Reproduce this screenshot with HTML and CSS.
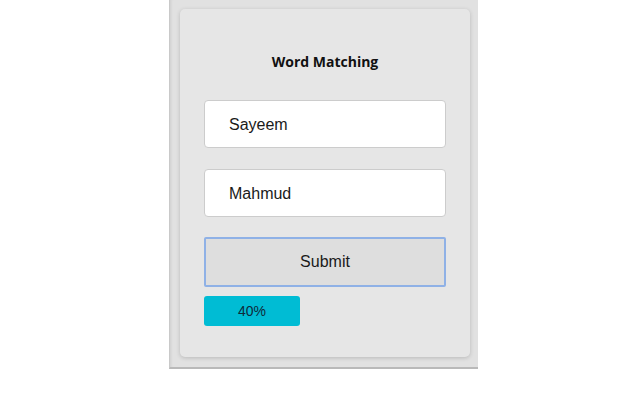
FILE: index.html
```html
<!DOCTYPE html>
<html>
<head>
<meta charset="utf-8">
<link rel="stylesheet" href="styles.css">
</head>
<body>
<div class="frame">
  <div class="card">
    <h1 class="title">Word Matching</h1>
    <div class="field">Sayeem</div>
    <div class="field">Mahmud</div>
    <button class="submit">Submit</button>
    <div class="progress">40%</div>
  </div>
</div>
</body>
</html>
```
FILE: styles.css
```css
html, body {
  margin: 0;
  padding: 0;
  background: #ffffff;
}
body {
  width: 640px;
  height: 400px;
  overflow: hidden;
}
.frame {
  margin-left: 169px;
  width: 309px;
  height: 369px;
  box-sizing: border-box;
  background: #e1e1e1;
  border-left: 1px solid #c9c9c9;
  border-bottom: 2px solid #b9b9b9;
  box-shadow: inset 3px 0 3px -2px #cfcfcf;
  padding: 9px 9px 0 10px;
}
.card {
  width: 290px;
  height: 348px;
  box-sizing: border-box;
  background: #e6e6e6;
  border-radius: 5px;
  box-shadow: 0 1px 4px rgba(0,0,0,0.18);
  padding: 43px 24px 0 24px;
  display: flex;
  flex-direction: column;
}
.title {
  margin: 0 0 28px 0;
  font-family: "Open Sans", "Noto Sans", sans-serif;
  font-weight: 700;
  font-size: 14px;
  line-height: 20px;
  text-align: center;
  color: #111111;
}
.field {
  height: 48px;
  box-sizing: border-box;
  background: #ffffff;
  border: 1px solid #cccccc;
  border-radius: 4px;
  padding: 2px 24px 0 24px;
  display: flex;
  align-items: center;
  font-family: "Liberation Sans", Arial, sans-serif;
  font-size: 16px;
  color: #1a1a1a;
  margin-bottom: 21px;
}
.submit {
  margin-top: -1px;
  height: 50px;
  width: 242px;
  box-sizing: border-box;
  background: #dedede;
  border: 2px solid #8fb1e6;
  border-radius: 2px;
  font-family: "Liberation Sans", Arial, sans-serif;
  font-size: 16px;
  color: #1a1a1a;
  padding: 0;
}
.progress {
  margin-top: 9px;
  width: 96px;
  height: 30px;
  background: #00bcd4;
  border-radius: 3px;
  display: flex;
  align-items: center;
  justify-content: center;
  font-family: "Liberation Sans", Arial, sans-serif;
  font-size: 14px;
  color: #0f2a3a;
}
```
